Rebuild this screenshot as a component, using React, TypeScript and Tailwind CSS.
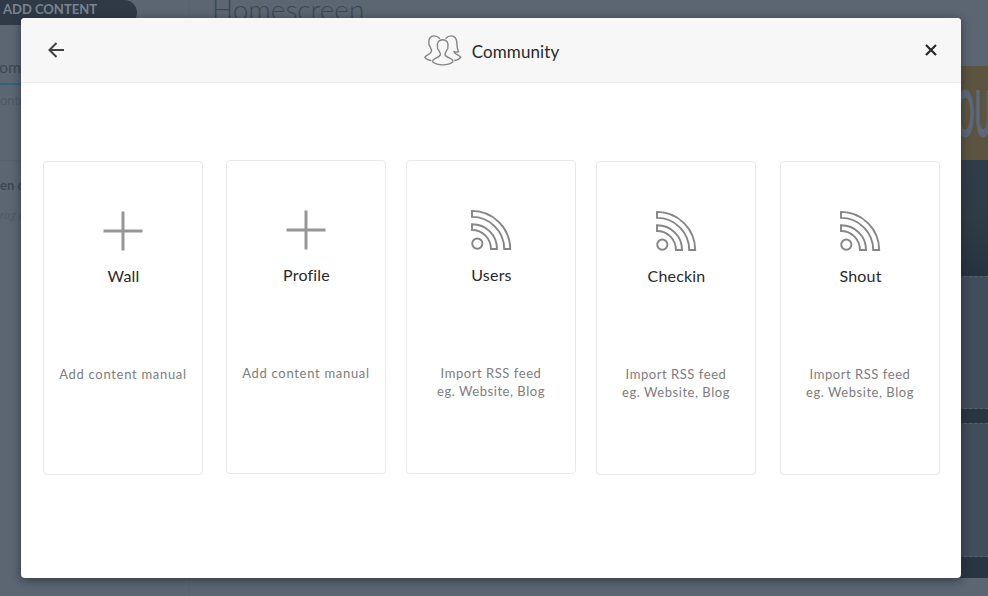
type Card = {
  title: string;
  icon: "plus" | "rss";
  lines: string[];
  box: string;
};

const cards: Card[] = [
  { title: "Wall", icon: "plus", lines: ["Add content manual"], box: "w-[160px] mt-px" },
  { title: "Profile", icon: "plus", lines: ["Add content manual"], box: "w-[160px] ml-[23px]" },
  { title: "Users", icon: "rss", lines: ["Import RSS feed", "eg. Website, Blog"], box: "w-[170px] ml-5" },
  { title: "Checkin", icon: "rss", lines: ["Import RSS feed", "eg. Website, Blog"], box: "w-[160px] ml-5 mt-px" },
  { title: "Shout", icon: "rss", lines: ["Import RSS feed", "eg. Website, Blog"], box: "w-[160px] ml-6 mt-px" },
];

function PlusIcon() {
  return (
    <svg width="42" height="42" viewBox="0 0 42 42" fill="none" stroke="#969696" strokeWidth="3">
      <path d="M21 1.5v39M1.5 21h39" />
    </svg>
  );
}

function RssIcon() {
  return (
    <svg width="42" height="42" viewBox="0 0 42 42" fill="none" stroke="#858585" strokeWidth="1.9">
      <circle cx="7.3" cy="34.6" r="5.1" />
      <path d="M2 15.300C16 15.300 27 26 27 40H21C21 29.5 12.5 21 2 21Z" />
      <path d="M2 1.900C23 1.900 40.200 19 40.200 40H34.200C34.200 22.300 19.800 7.900 2 7.900Z" />
    </svg>
  );
}

function CommunityIcon() {
  return (
    <svg width="38" height="32" viewBox="0 0 38 32" fill="none" stroke="#858585" strokeWidth="1.4" strokeLinecap="round" strokeLinejoin="round">
      <path d="M8.800 25.400C10 23 15.800 22.600 16.400 19.500C16.600 17.800 15.300 17.200 14.900 15.300C13.800 14.700 13.200 13.500 13.500 12C12.800 7.500 14.800 4.700 18.700 4.700S24.600 7.500 23.900 12C24.200 13.500 23.600 14.700 22.500 15.300C22.100 17.200 20.800 17.800 21 19.500C21.600 22.600 27.600 23 28.800 25.400" />
      <path d="M8.600 26.800C11 28.900 14.700 29.900 18.700 29.900S26.600 28.900 29 26.800" />
      <path d="M15.400 3.200C14 1.600 12.300 .9 10.200 .9C6.200 .9 4.300 3.900 5 8.200C4.700 9.700 5.200 10.700 6 11.400C6.400 13.200 7.800 14.200 7.500 16.200C7 19.600 2.200 19.300 .8 22.400C2.200 23.900 4.500 25 6.700 25.500" />
      <path d="M22 3.200C23.300 1.600 25.100 .9 27.200 .9C31.500 .9 32.700 4.300 32.900 8.200C33.100 11.600 33.200 14.600 34.600 16.600C33 17.300 31.300 17.200 29.900 16.600C30.300 19.600 35.400 19.300 36.800 22.400C35.400 23.900 33.100 25 30.900 25.500" />
    </svg>
  );
}

function Backdrop() {
  return (
    <div className="flex h-full w-full bg-[#5b6672] text-[#3d4753]">
      <aside className="flex w-[190px] flex-col border-r border-[#576270] whitespace-nowrap">
        <div className="h-[25px] w-[137px] rounded-r-[14px] bg-[#2f3a46] pl-[3px] text-[13px] leading-[19px] font-bold text-[#7a8490]">
          ADD CONTENT
        </div>
        <div className="mt-[25px] h-[35px] border-b-2 border-[#2f6382] text-[16px] leading-[34px]">
          <span className="-ml-px">ome</span>
        </div>
        <div className="h-[76px] border-b border-[#566170] text-[13px] leading-[31px] text-[#4e5965]">ontent</div>
        <div className="mt-[14px] text-[13px] leading-[20px] font-bold">en content</div>
        <div className="mt-[10px] text-[12px] leading-[20px] text-[#4e5965] italic">rag and drop</div>
      </aside>
      <main className="flex-1 pl-[22px]">
        <h1 className="mt-[-9px] text-[28px] leading-[37px] font-light">Homescreen</h1>
      </main>
      <div className="flex w-[40px] flex-col overflow-hidden pt-[66px]">
        <div className="h-[94px] bg-[#5c543f] pt-[15px] pl-[8px] text-[#5b6879]">
          <div className="origin-left scale-x-[0.36] text-[64px] leading-[64px] font-black whitespace-nowrap">OU</div>
        </div>
        <div className="h-[116px] bg-gradient-to-b from-[#303c48] via-[#2f3c45] to-[#26323e]" />
        <div className="h-[133px] border-y border-dashed border-[#586470] bg-[#414d5b]" />
        <div className="h-[14px] bg-[#293541]" />
        <div className="h-[134px] border-y border-dashed border-[#586470] bg-[#414d5a]" />
        <div className="h-[21px] bg-[#293541]" />
      </div>
    </div>
  );
}

export default function App() {
  return (
    <div className="relative h-[596px] w-[988px] overflow-hidden font-['Lato','Noto_Sans',sans-serif]">
      <Backdrop />
      <section className="absolute top-[18px] left-[21px] flex h-[560px] w-[940px] flex-col overflow-hidden rounded-[4px] bg-white shadow-[0_2px_10px_rgba(20,28,38,0.6)]">
        <header className="flex h-[65px] shrink-0 items-center justify-between border-b border-[#ebebeb] bg-[#f7f7f7] pr-[23px] pl-[27px]">
          <button aria-label="Back">
            <svg width="17" height="16" viewBox="0 0 17 16" fill="none" stroke="#414141" strokeWidth="2">
              <path d="M8.500 1L1.500 8l7 7M1.500 8H16" />
            </svg>
          </button>
          <div className="flex items-center gap-[10px] pr-[6px]">
            <div className="pt-[2px]">
              <CommunityIcon />
            </div>
            <h2 className="pt-[3px] text-[17px] leading-6 tracking-[0.1px] text-[#292929]">Community</h2>
          </div>
          <button aria-label="Close">
            <svg width="14" height="14" viewBox="0 0 14 14" fill="none" stroke="#292929" strokeWidth="2.200">
              <path d="M2 2l10 10M12 2L2 12" />
            </svg>
          </button>
        </header>
        <div className="flex items-start pt-[77px] pl-[22px]">
          {cards.map((card) => (
            <article
              key={card.title}
              className={`flex h-[314px] shrink-0 flex-col items-center rounded-[4px] border border-[#e9e9e9] pt-[48px] text-center ${card.box}`}
            >
              {card.icon === "plus" ? <PlusIcon /> : <RssIcon />}
              <h3 className="mt-[12px] pl-px text-[16px] leading-6 tracking-[0.2px] text-[#292929]">{card.title}</h3>
              <p
                className={`mt-[77px] text-[13px] leading-[18px] whitespace-nowrap text-[#7d7d7d] ${card.icon === "plus" ? "tracking-[0.7px]" : "tracking-[0.55px]"}`}
              >
                {card.lines.map((line) => (
                  <span key={line} className="block">
                    {line}
                  </span>
                ))}
              </p>
            </article>
          ))}
        </div>
      </section>
    </div>
  );
}
